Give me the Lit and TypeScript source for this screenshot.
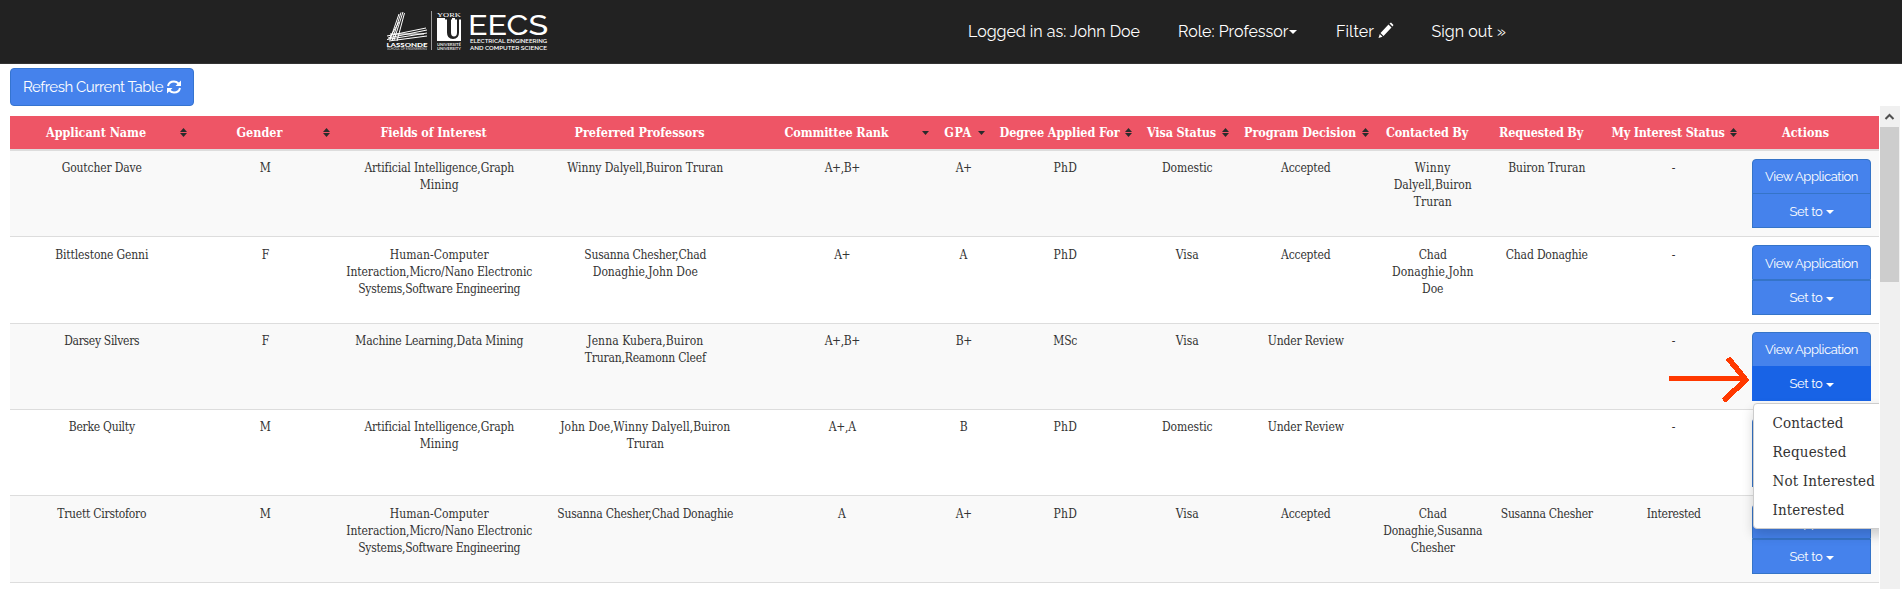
import { LitElement, html, css, svg } from "lit";
import { customElement } from "lit/decorators.js";
import { styleMap } from "lit/directives/style-map.js";
import { classMap } from "lit/directives/class-map.js";

// A label together with the advance width it occupies in the layout.
type Label = [string, number];
interface Column { label: string; width: number; sort?: "both" | "down"; textWidth: number; }

const COLUMNS: Column[] = [
  { label: "Applicant Name", width: 184, sort: "both", textWidth: 100 },
  { label: "Gender", width: 143, sort: "both", textWidth: 46 },
  { label: "Fields of Interest", width: 205, textWidth: 106 },
  { label: "Preferred Professors", width: 207, textWidth: 130 },
  { label: "Committee Rank", width: 187, sort: "down", textWidth: 104 },
  { label: "GPA", width: 56, sort: "down", textWidth: 27.5 },
  { label: "Degree Applied For", width: 147, sort: "both", textWidth: 120 },
  { label: "Visa Status", width: 97, sort: "both", textWidth: 69 },
  { label: "Program Decision", width: 140, sort: "both", textWidth: 112 },
  { label: "Contacted By", width: 114, textWidth: 82 },
  { label: "Requested By", width: 114, textWidth: 84 },
  { label: "My Interest Status", width: 140, sort: "both", textWidth: 113 },
  { label: "Actions", width: 135, textWidth: 47 },
];

const AI: Label[] = [["Artificial Intelligence,Graph", 149.5], ["Mining", 39]];
const HCI: Label[] = [["Human-Computer", 99], ["Interaction,Micro/Nano Electronic", 186], ["Systems,Software Engineering", 162]];
const PHD: Label[] = [["PhD", 23.5]];
const VISA: Label[] = [["Visa", 23]];
const DOMESTIC: Label[] = [["Domestic", 50.5]];
const ACCEPTED: Label[] = [["Accepted", 49.5]];
const REVIEW: Label[] = [["Under Review", 76]];
const DASH: Label[] = [["-", 4]];
const M: Label[] = [["M", 11]];
const F: Label[] = [["F", 7]];
const AP: Label[] = [["A+", 16]];

const ROWS: Label[][][] = [
  [[["Goutcher Dave", 80]], M, AI, [["Winny Dalyell,Buiron Truran", 156]], [["A+,B+", 35]], AP, PHD, DOMESTIC, ACCEPTED,
    [["Winny", 36], ["Dalyell,Buiron", 78], ["Truran", 38]], [["Buiron Truran", 77]], DASH],
  [[["Bittlestone Genni", 93]], F, HCI, [["Susanna Chesher,Chad", 122], ["Donaghie,John Doe", 105]], AP, [["A", 8.5]], PHD, VISA, ACCEPTED,
    [["Chad", 28], ["Donaghie,John", 81.5], ["Doe", 21.5]], [["Chad Donaghie", 82]], DASH],
  [[["Darsey Silvers", 75]], F, [["Machine Learning,Data Mining", 168]], [["Jenna Kubera,Buiron", 116], ["Truran,Reamonn Cleef", 121]], [["A+,B+", 35]], [["B+", 16]], [["MSc", 24]], VISA, REVIEW, [], [], DASH],
  [[["Berke Quilty", 66]], M, AI, [["John Doe,Winny Dalyell,Buiron", 170], ["Truran", 37]], [["A+,A", 27]], [["B", 8]], PHD, DOMESTIC, REVIEW, [], [], DASH],
  [[["Truett Cirstoforo", 89]], M, HCI, [["Susanna Chesher,Chad Donaghie", 176]], [["A", 8.5]], AP, PHD, VISA, ACCEPTED,
    [["Chad", 28], ["Donaghie,Susanna", 99], ["Chesher", 44]], [["Susanna Chesher", 92]], [["Interested", 54]]],
];

@customElement("fit-text")
class FitText extends LitElement {
  static properties = { text: {}, width: { type: Number } };
  declare text: string;
  declare width: number;
  static styles = css`
    :host { display: inline-block; white-space: nowrap; }
    .run { display: inline-block; }
  `;
  // Spreads the difference between natural and wanted width over the letters.
  updated() {
    const run = this.renderRoot.querySelector(".run") as HTMLElement;
    run.style.letterSpacing = "0px";
    const natural = run.getBoundingClientRect().width;
    const gap = (this.width - natural) / this.text.length;
    run.style.letterSpacing = gap.toFixed(3) + "px";
  }
  render() { return html`<span class="run">${this.text}</span>`; }
}

const fit = (text: string, width: number) => html`<fit-text .text=${text} .width=${width}></fit-text>`;

@customElement("app-root")
class AppRoot extends LitElement {
  static styles = css`
    :host { display: block; height: 589px; overflow: hidden; background: #fff; color: #333;
      font: 12px/17.14px "DejaVu Serif Condensed", "DejaVu Serif", serif; font-stretch: condensed; }
    * { box-sizing: border-box; }
    .sans { font-family: Raleway, Lato, sans-serif; font-stretch: normal; }
    .nav { display: flex; align-items: flex-start; height: 64px; background: #222; border-bottom: 1px solid #333; color: #fff; font-size: 16px; line-height: 24px; padding-left: 385px; }
    .logo { width: 165px; height: 45px; margin-top: 8px; flex: none; }
    .links { display: flex; margin-left: 418px; padding-top: 20px; }
    .link { display: flex; align-items: center; height: 24px; }
    .l1 { width: 210px; } .l2 { width: 158px; } .l3 { width: 95.5px; }
    .caret { width: 0; height: 0; border: 4px solid transparent; border-top-color: currentColor; border-bottom: 0; }
    .pencil { margin: -4px 0 0 4px; }
    .main { display: flex; height: 525px; }
    .left { width: 1880px; flex: none; padding: 4px 1px 0 10px; }
    .refresh { display: flex; align-items: center; width: 184px; height: 38px; background: #4582ec; border: 1px solid #3574d0; border-radius: 4px; color: #fff; font-size: 15px; padding: 1px 0 0 12px; gap: 4px; }
    .refresh svg { margin-top: -2px; }
    .table { margin-top: 10px; height: 473px; overflow: hidden; position: relative; }
    .row { display: grid; text-align: center; }
    .head { height: 35px; background: #ee5566; border-bottom: 2px solid #ddd; color: #fff; font-weight: bold; font-size: 12.5px; }
    .th { display: flex; align-items: center; justify-content: center; padding: 0 20px 0 8px; height: 33px; position: relative; white-space: nowrap; }
    .sort { position: absolute; right: 7px; top: 12px; }
    .body { height: 86.35px; border-bottom: 1px solid #ddd; background: #fff; }
    .odd { background: #f9f9f9; }
    .td { padding-top: 9.2px; margin-left: -.5px; }
    .line { display: block; height: 17.14px; }
    .actions { padding: 8px 8px 0; color: #fff; font-size: 13px; }
    .btn { display: flex; align-items: center; justify-content: center; gap: 3px; background: #4582ec; border: 1px solid #3574c8; height: 35.1px; }
    .btn.view { border-radius: 4px 4px 0 0; padding-top: 1px; }
    .btn.set { margin-top: -.9px; padding-top: 1px; }
    .btn.active { background: #1863e6; border-color: #1863e6; }
    .btn .caret { margin-top: 2px; }
    .menu { position: absolute; left: 1742.5px; top: 287px; width: 160px; height: 126px; padding: 5px 0; background: #fff; border: 1px solid #ccc; border-radius: 4px; box-shadow: 0 6px 12px rgba(0,0,0,.175); font-family: "DejaVu Serif", serif; font-size: 15px; }
    .item { height: 29px; line-height: 29px; padding-left: 19px; }
    .arrow { position: absolute; left: 1658px; top: 238px; }
    .bar { width: 20px; height: 483px; margin-top: 42px; background: #f0f0f0; }
    .up { display: block; height: 21px; }
    .thumb { width: 19px; height: 155px; background: #cdcdcd; }
    .heavy { font: 900 6.2px Lato, sans-serif; }
    .tiny { font: 2.8px Lato, sans-serif; }
    .york { font: 7px "Liberation Serif", serif; }
    .uni { font: bold 3.6px Lato, sans-serif; }
    .eecs { font: 500 28.5px Raleway, Lato, sans-serif; }
    .dept { font: 600 5.9px Raleway, Lato, sans-serif; }
  `;

  logo() {
    return html`<svg class="logo" viewBox="385 8 165 45" fill="#fff">
      <g stroke="#fff" fill="none" stroke-width="1">
        <path d="M399 14 390 40M401 12.500 392 41M403 12 394 40M404.500 13 397 41M399 22 389 39"/>
        <path d="M387 36 426 28M388 38 427 30M387 39.500 427 33M389 41 427 36M390 34 424 34" />
      </g>
      <text class="heavy" x="386.500" y="46.500" textLength="41" lengthAdjust="spacingAndGlyphs">LASSONDE</text>
      <text class="tiny" x="387" y="50" textLength="40" lengthAdjust="spacingAndGlyphs" opacity=".75">SCHOOL OF ENGINEERING</text>
      <path d="M431 11h1v39h-1z" opacity=".55"/>
      <text class="york" x="437" y="16.500" textLength="24" lengthAdjust="spacingAndGlyphs">YORK</text>
      <path d="M437 18h24v23h-24z"/>
      <path d="M445 18h7v1.500h-1v13q0 4 3 4t3-4v-13h-2V18h6v1.500h-2v13q0 6.500-6 6.500-6 0-6-6.500v-13h-2z" fill="#222"/>
      <text class="uni" x="437" y="46" textLength="24" lengthAdjust="spacingAndGlyphs" opacity=".85">UNIVERSITÉ</text>
      <text class="uni" x="437" y="50" textLength="24" lengthAdjust="spacingAndGlyphs" opacity=".85">UNIVERSITY</text>
      <text class="eecs" x="468" y="34.500" textLength="80" lengthAdjust="spacingAndGlyphs">EECS</text>
      <text class="dept" x="470" y="43" textLength="77" lengthAdjust="spacingAndGlyphs">ELECTRICAL ENGINEERING</text>
      <text class="dept" x="470" y="49.700" textLength="77" lengthAdjust="spacingAndGlyphs">AND COMPUTER SCIENCE</text>
    </svg>`;
  }

  render() {
    const columns = styleMap({ gridTemplateColumns: COLUMNS.map((c) => c.width + "px").join(" ") });
    return html`
      <div class="nav sans">
        ${this.logo()}
        <div class="links">
          <div class="link l1">${fit("Logged in as: John Doe", 172)}</div>
          <div class="link l2">${fit("Role: Professor", 110.5)}<i class="caret"></i></div>
          <div class="link l3">${fit("Filter", 38)}
            <svg class="pencil" width="16" height="17" viewBox="0 0 16 17" fill="#fff"><path d="M11.500 1.500 13 .5 15.500 3 14.500 4.500zM10.500 2.500 13.500 5.500 5.500 14 2.500 11zM1.800 12 4.500 14.800.500 16z"/></svg></div>
          <div class="link">${fit("Sign out »", 74.5)}</div>
        </div>
      </div>
      <div class="main">
        <div class="left">
          <div class="refresh sans">${fit("Refresh Current Table", 140)}
            <svg width="14" height="14" viewBox="0 0 14 14"><path d="M1 6Q2 1.500 7 1.500 9.500 1.500 11.500 3.500M13 8Q12 12.500 7 12.500 4.500 12.500 2.500 10.500" fill="none" stroke="#fff" stroke-width="2"/><path d="M14 .500V6H8.500zM0 13.500V8h5.500z" fill="#fff"/></svg>
          </div>
          <div class="table">
            <div class="row head" style=${columns}>
              ${COLUMNS.map((c) => html`<div class="th">${fit(c.label, c.textWidth)}${c.sort
                ? html`<svg class="sort" width="7" height="10" viewBox="0 0 7 10" fill="#292b2c">${c.sort === "both" ? svg`<path d="M0 4 3.500 0 7 4zM0 5H7L3.500 9z"/>` : svg`<path d="M0 3H7L3.500 7z"/>`}</svg>` : ""}</div>`)}
            </div>
            ${ROWS.map((r, i) => html`<div class="row body ${i % 2 ? "" : "odd"}" style=${columns}>
              ${r.map((lines) => html`<div class="td">${lines.map(([t, w]) => html`<span class="line">${fit(t, w)}</span>`)}</div>`)}
              <div class="actions sans">
                <div class="btn view">${fit("View Application", 93)}</div>
                <div class=${classMap({ btn: true, set: true, active: i === 2 })}>${fit("Set to", 33)}<i class="caret"></i></div>
              </div></div>`)}
            <svg class="arrow" width="92" height="50" viewBox="0 0 92 50" fill="none" stroke="#ff3900" stroke-width="5" shape-rendering="crispEdges"><path d="M1 24.500H78"/><path d="M60 4 79.500 28M55.500 46.500 79 25" stroke-width="5.600"/></svg>
            <div class="menu">${[["Contacted", 71], ["Requested", 74], ["Not Interested", 102.5], ["Interested", 72]].map(([t, w]) => html`<div class="item">${fit(t as string, w as number)}</div>`)}</div>
          </div>
        </div>
        <div class="bar">
          <svg class="up" width="19" height="21" viewBox="0 0 19 21" fill="none" stroke="#505050" stroke-width="2"><path d="M5.500 13 9.500 9 13.500 13"/></svg>
          <div class="thumb"></div>
        </div>
      </div>`;
  }
}
